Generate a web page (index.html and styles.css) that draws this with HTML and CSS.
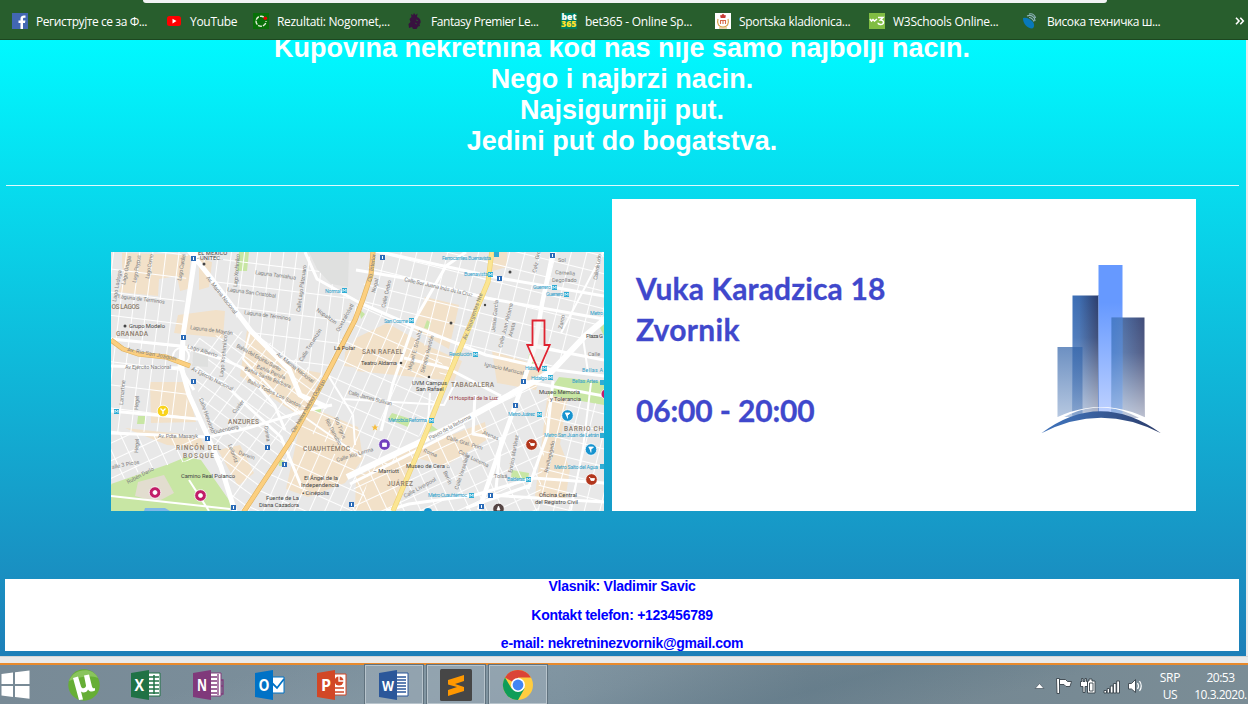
FILE: index.html
```html
<!DOCTYPE html>
<html lang="sr">
<head>
<meta charset="utf-8">
<title>Nekretnine Zvornik</title>
<link rel="stylesheet" href="styles.css">
</head>
<body>
<div class="screen">
  <header class="bookmarks">
    <div class="toolbar-edge"></div>
    <nav class="bookmark-list">
      <a class="bookmark"><svg class="fav" viewBox="0 0 16 16"><rect width="16" height="16" fill="#4267b2"/><path d="M11 16V10h2l.4-2.500H11V6c0-.9.400-1.300 1.300-1.300h1.200V2.600C11 2.200 8.500 2.600 8.500 5.600v1.900H6.500V10h2v6z" fill="#fff"/></svg><span class="b1">Региструјте се за Ф...</span></a>
      <a class="bookmark short"><svg class="fav" viewBox="0 0 16 16"><rect x="1" y="3" width="14" height="10" rx="2.500" fill="#f00"/><path d="M6.500 5.700v4.800L10.500 8z" fill="#fff"/></svg><span class="b2">YouTube</span></a>
      <a class="bookmark"><svg class="fav" viewBox="0 0 16 16"><rect width="16" height="16" fill="#087008"/><path d="M10.800 4.100A5 5 0 1 0 13 8" fill="none" stroke="#e5eedb" stroke-width="1.400" stroke-dasharray="4 1"/><circle cx="12.300" cy="5.200" r="1.800" fill="#e80000"/></svg><span class="b3">Rezultati: Nogomet,...</span></a>
      <a class="bookmark"><svg class="fav" viewBox="0 0 16 16"><path d="M4 1l2 1 1-2 1.500 2 2-1.500-.5 3.500c3 1 4 3 3.500 6l-1 1 .5 2-2 .5-1.500 2.500H6l-1-2-3 1-.5-4 2-2-1-3 2-2z" fill="#38123f"/><path d="M9 7l2 .7M8 10l2 1" stroke="#285e2d" stroke-width=".7"/></svg><span class="b4">Fantasy Premier Le...</span></a>
      <a class="bookmark"><svg class="fav" viewBox="0 0 16 16"><rect width="16" height="16" fill="#027b5b"/><text x="0.500" y="6.700" textLength="15" lengthAdjust="spacingAndGlyphs" class="bet" fill="#fff">bet</text><text x="0" y="14.300" textLength="15.500" lengthAdjust="spacingAndGlyphs" class="bet" fill="#ffe32b">365</text></svg><span class="b5">bet365 - Online Sp...</span></a>
      <a class="bookmark"><svg class="fav" viewBox="0 0 16 16"><rect width="16" height="16" fill="#fff"/><path d="M5 2l1 .5L8 .8l2 1.700 1-.5-.7 3H5.700z" fill="#c73b35"/><path d="M3 6c-1.500 5 1 8 5 8s6.500-3 5-8" fill="none" stroke="#d9a44b" stroke-width="1.200"/><path d="M5.500 11V7.500h5V11M8 7.500V11" fill="none" stroke="#d86a4a" stroke-width="1.100"/><path d="M4 15h8" stroke="#dbaa5b"/></svg><span class="b6">Sportska kladionica...</span></a>
      <a class="bookmark"><svg class="fav" viewBox="0 0 16 16"><rect width="16" height="16" fill="#80bd43"/><path d="M1 6l1.500 2L4 6.500 5.500 8 8 6M9 4.500h5L11.500 7c4-.2 4 5-.3 4.500-1.500-.2-2.200-.8-2.200-1.700" fill="none" stroke="#fff" stroke-width="1.500"/></svg><span class="b7">W3Schools Online...</span></a>
      <a class="bookmark"><svg class="fav" viewBox="0 0 16 16"><path d="M0 5c4-1 7 1 10 4 2 3 1 6-1 6.500C4 15 0 11 0 5z" fill="#0879ba"/><path d="M4 3c4-2 8 1 8 5M6 1c4-1 6 2 6.500 4M6 4.500c2 0 4 2 5 4" fill="none" stroke="#8eb4bb" stroke-width="1.200"/></svg><span class="b8">Висока техничка ш...</span></a>
    </nav>
    <svg class="more" viewBox="0 0 10 8"><path d="M1 .8L4 4 1 7.200M5.300.8l3 3.200-3 3.200" fill="none" stroke="#fff" stroke-width="1.600"/></svg>
  </header>

  <main class="page">
    <h1 class="slogan"><span>Kupovina nekretnina kod nas nije samo najbolji nacin.</span><span>Nego i najbrzi nacin.</span><span>Najsigurniji put.</span><span>Jedini put do bogatstva.</span></h1>
    <hr class="rule">
    <section class="location">
      <svg class="map" viewBox="111 252 493 259">
        <defs>
          <pattern id="ga" width="13" height="23" patternUnits="userSpaceOnUse" patternTransform="rotate(7)"><path d="M0 0H13M0 0V23" stroke="#fff" stroke-width="2"/></pattern>
          <pattern id="gb" width="15" height="12" patternUnits="userSpaceOnUse" patternTransform="rotate(36)"><path d="M0 0H15M0 0V12" stroke="#fff" stroke-width="2"/></pattern>
          <pattern id="gc" width="15" height="17" patternUnits="userSpaceOnUse" patternTransform="rotate(14)"><path d="M0 0H15M0 0V17" stroke="#fff" stroke-width="2"/></pattern>
          <pattern id="gd" width="15" height="16" patternUnits="userSpaceOnUse" patternTransform="rotate(-25)"><path d="M0 0H15M0 0V16" stroke="#fff" stroke-width="2"/></pattern>
          <pattern id="ge" width="14" height="19" patternUnits="userSpaceOnUse" patternTransform="rotate(24)"><path d="M0 0H14M0 0V19" stroke="#fff" stroke-width="2"/></pattern>
        </defs>
        <rect x="111" y="252" width="493" height="259" fill="#e8e8e8"/>
        <g fill="#f2e1c9">
          <path d="M122 253l69 2-3 34-8 2-3-15-18 3-1 17-40-4 7-13-3-13z"/>
          <path d="M199 258l13 4-3 25-10 3zM178 315l38-5 9 1-2 27-49-5z"/>
          <path d="M247 330l47 38 27 5-18 45-20-13-43-29z"/>
          <path d="M150 382h36l10 40-45 1zM125 428l75 8 5 12-38-3z"/>
          <path d="M218 450l22-5 14 28-16 13zM304 407l13 3 41 17 5 32-18 24-37 14-22-8z"/>
          <path d="M356 338l31-15 39 22 36 16-8 20-98-10zM425 297l34 8-10 44-35-20z"/>
          <path d="M356 477l60-30-21 63h-40zM420 447l65-25 3 17-43 27-28-8z"/>
          <path d="M492 351l52 16-8 23-39-7zM548 391l20 3-8 50 10 25-5 32-22 0-8-5z"/>
          <path d="M494 252h13v15l-18 5z"/>
          <path d="M345 352l13-14v30l-14-2z"/>
        </g>
        <g fill="#c8e6a4">
          <path d="M239 252h10l-2 19h-10zM111 484l58-20 17-7 15 3 30 43-1 8H111zM559 377l45 5v23l-57-10zM392 413l19 6-3 8-20-8zM427 422l11 8-12 3zM512 470l17 3-1 7-17-3zM138 416h7v8h-8zM359 309l6 5-4 5zM427 320l4 3-3 6-4-1zM529 354l6 3-2 8-5-3zM600 328l4-4v12z"/><circle cx="318" cy="410" r="3"/><path d="M278 458l6 3-1 5-4 0z"/>
        </g>
        <path d="M138 482l26-7 10 18-17 9-22-6z" fill="#e2ddcf"/><path d="M145 508l20 0 5 3h-26z" fill="#80b9e6"/>
        <path d="M111 252h77l-6 87 5 60 10 31-86 3z" fill="url(#ga)"/>
        <path d="M111 433l87 5 15 18-70 14-32 15z" fill="url(#gd)"/>
        <path d="M190 252h115l53 56-33 70-38-7-50-53z" fill="url(#ga)"/>
        <path d="M187 340l64-10 74 48-80 133h-9l-28-75z" fill="url(#gb)"/>
        <path d="M373 252h118l-2 35-44 96-30-55-57-24z" fill="url(#gc)"/>
        <path d="M490 252h114v66l-54 50-98-22z" fill="url(#gc)"/>
        <path d="M357 303l56 23 37 48-24 55-46 46-58-35-30-20 33-47z" fill="url(#ge)"/>
        <path d="M290 440l80 25-8 46H247z" fill="url(#ge)"/>
        <path d="M356 474l62-29 110-65 21 13-10 118H350z" fill="url(#gd)"/>
        <path d="M548 395l56 10v106h-68z" fill="url(#gc)"/>
        <path d="M309 252h40l-1 35-17-3-14-15zM194 346l14 3 0 18-16-1z" fill="#dfe0df"/>
        <g fill="none" stroke="#fff" stroke-linejoin="round" stroke-width="3">
          <path stroke-width="5" d="M187 248l24 30 40 53 38 38 11 26 27 12M196 250l-13 86-1 34 7 25 19 42 13 30 15 48"/>
          <path d="M111 339l70 7 44 14 18 8 32 38 10 24M181 346l-1 22 14 22M194 369l30 14 20 20 37 34 21 51M111 366l70 2M111 411l87 8M111 433l97 4 40-9 60-18 24-5"/>
          <path d="M305 252l12 27 43 24 53 23 73 29 63 14 55 7M356 270l60 10 70 18 67 12 51 9M439 265l60 13 105 18M439 265l-63-14"/>
          <path d="M111 496l119 13M189 480l20 31M250 332l-7 27 43 45 75 53M326 372l27 43 2 30M343 399l101 6 12-24" stroke-width="2"/>
          <path stroke-width="4.500" d="M553 252l-11 52-7 42-12 37-19 54-25 73"/>
          <path stroke-width="6" d="M347 477l71-34 48-24 85-47 34-36 25-21"/>
          <path d="M350 484l70-35 45-23M386 511l23-7 66-9 58-17 71 5M466 508l65-23M489 495l115 7M553 381l-6 55-19 53M523 381l81 15M537 347l67 13M404 358l43 10 54 28M466 252l-20 14-33 57M413 326l-20 57-12 48M475 395l-2 39 28 5-5 50"/>
          <path d="M393 511l35-88 2-30M591 383l-8 65-12 62M583 338l5 34M604 251l-43 82" stroke-width="2"/>
          <circle cx="181" cy="356" r="8" stroke-width="2"/>
        </g>
        <g fill="none" stroke-linejoin="round">
          <path d="M111 340l12 9 15 5 28 3 24 9M373 252l-2 23-8 24-8 21-30 58-34 62-48 73" stroke="#dfb05c" stroke-width="5"/>
          <path d="M111 340l12 9 15 5 28 3 24 9M373 252l-2 23-8 24-8 21-30 58-34 62-48 73" stroke="#fbcf80" stroke-width="3.800"/>
          <path d="M492 250l-4 32-20 48-22 52-18 46-12 29-23 54" stroke="#efd272" stroke-width="5"/><path d="M492 250l-4 32-20 48-22 52-18 46-12 29-23 54" stroke="#fbe592" stroke-width="3.800"/>
        </g>
        <g class="road-label">
          <text transform="translate(206 278) rotate(52)" textLength="46">Av. Marina Nacional</text><text transform="translate(276 355) rotate(38)" textLength="46">Av. Marina Nacional</text>
          <text transform="translate(255 274) rotate(8)" textLength="41">Laguna Tamiahua</text><text transform="translate(227 291) rotate(8)" textLength="49">Laguna San Cristóbal</text><text transform="translate(244 314) rotate(8)" textLength="47">Laguna de Términos</text><text transform="translate(118 298) rotate(7)" textLength="47">Laguna de Términos</text><text transform="translate(190 329) rotate(8)" textLength="43">Laguna de Mayrán</text>
          <text transform="translate(187 348) rotate(17)">Lago Alberto</text><text transform="translate(127 351) rotate(11)" textLength="50">Av. Río San Joaquín</text><text x="125" y="369" textLength="46">Av Ejército Nacional</text><text transform="translate(191 370) rotate(27)" textLength="46">Av Ejército Nacional</text>
          <text transform="translate(125 285) rotate(-78)">Lago Onega</text><text transform="translate(136 283) rotate(-80)" textLength="28">Lago Peypus</text><text transform="translate(149 279) rotate(-80)" textLength="25">Lago Como</text><text transform="translate(181 281) rotate(-80)" textLength="27">Lago Cardiel</text><text transform="translate(116 302) rotate(-80)">Lago Ladoga</text><text transform="translate(237 287) rotate(-85)" textLength="33">Lago Xochimilco</text><text transform="translate(223 377) rotate(-84)" textLength="42">Lago Xochimilco</text><text transform="translate(300 312) rotate(-82)" textLength="47">Calle Lago Pátzcuaro</text>
          <text transform="translate(236 347) rotate(29)" textLength="50">Bahía del Espíritu Santo</text><text transform="translate(244 370) rotate(22)">Bahía Santa Bárbara</text><text transform="translate(247 382) rotate(26)">Bahía Todos Los Santos</text><text transform="translate(256 368) rotate(22)">Bahía Perula</text>
          <text transform="translate(302 362) rotate(-58)">Calle Tonantzin</text><text transform="translate(316 311) rotate(35)">Nopaltzin</text><text transform="translate(339 332) rotate(-61)">Quetzalcóatl</text><text transform="translate(294 433) rotate(-59)" textLength="61">Cto. Interior Melchor Ocampo</text><text transform="translate(371 282) rotate(-80)" textLength="28">Cto. Interior</text>
          <text transform="translate(404 281) rotate(13)" textLength="70">Calle Sor Juana Inés de la Cruz</text><text transform="translate(466 340) rotate(-70)" textLength="49">Av. Insurgentes Nte</text><text transform="translate(375 293) rotate(-76)">Nogal</text><text transform="translate(385 308) rotate(-77)">Calle Cedro</text><text transform="translate(411 371) rotate(-75)">Miguel E. Schultz</text><text transform="translate(424 373) rotate(-75)">Serapio Rendón</text>
          <text transform="translate(495 332) rotate(-84)">Jesús García</text><text transform="translate(502 348) rotate(-76)">Calle Juan Aldama</text><text transform="translate(512 337) rotate(-76)">Arista</text><text transform="translate(484 366) rotate(13)">Ignacio Mariscal</text><text transform="translate(536 273) rotate(-78)">Calz. Gro</text><text transform="translate(597 280) rotate(-80)" textLength="26">Calle de León</text><text transform="translate(562 329) rotate(-78)">Zarco</text><text x="555" y="274" transform="rotate(4 555 274)">Camelia</text><text x="552" y="282">Degollado</text><text x="558" y="262">Sol</text>
          <text transform="translate(123 405) rotate(-85)">Lamartine</text><text transform="translate(138 410) rotate(-85)">Hegel</text><text transform="translate(138 453) rotate(-85)">Hegel</text><text x="158" y="438" textLength="40">Av. Pdte. Masaryk</text><text transform="translate(199 399) rotate(70)">Calle Herodoto</text><text transform="translate(214 434) rotate(-13)">Gutenberg</text><text transform="translate(235 414) rotate(-53)">Cuvier</text><text transform="translate(228 445) rotate(69)">Leibnitz</text><text transform="translate(238 454) rotate(20)">Darwin</text><text transform="translate(264 426) rotate(80)">Corina</text><text transform="translate(325 420) rotate(62)">Río Danubio</text><text transform="translate(334 418) rotate(68)">Río Tigris</text><text transform="translate(128 484) rotate(-28)">Rubén Darío</text><text transform="translate(112 469) rotate(-11)">alle 3 Picos</text>
          <text transform="translate(337 462) rotate(-17)">Calle Río Lerma</text><text transform="translate(348 394) rotate(15)" textLength="45">Calle James Sullivan</text><text transform="translate(430 440) rotate(-28)" textLength="47">Paseo de la Reforma</text><text transform="translate(446 439) rotate(17)">Calle Gral. Prim</text><text transform="translate(458 453) rotate(26)">Calle Lucerna</text><text transform="translate(482 434) rotate(22)">Atenas</text><text transform="translate(423 452) rotate(22)">Roma</text><text transform="translate(443 472) rotate(65)">Berlín</text><text transform="translate(458 490) rotate(-72)">Calle Versalles</text><text transform="translate(405 498) rotate(-29)">Calle Liverpool</text><text transform="translate(512 473) rotate(-80)">Enrico Martínez</text><text transform="translate(548 473) rotate(-78)">Revillagigedo</text><text x="494" y="478">Tolsá</text><text x="588" y="356">Calle</text>
        </g>
        <g class="district"><text x="111.500" y="309" textLength="28">OS LAGOS</text><text x="116" y="336" textLength="32">GRANADA</text><text x="362" y="354" textLength="41">SAN RAFAEL</text><text x="451" y="387" textLength="43">TABACALERA</text><text x="228" y="424" textLength="31">ANZURES</text><text x="176" y="450" textLength="45">RINCÓN DEL</text><text x="183" y="458" textLength="31">BOSQUE</text><text x="303" y="451" textLength="47">CUAUHTÉMOC</text><text x="387" y="486" textLength="26">JUÁREZ</text><text x="564" y="431" textLength="39">BARRIO CH</text></g>
        <g class="poi"><text x="198" y="254.500">EL MÉXICO</text><text x="197" y="260">- UNITEC..</text><circle cx="204" cy="264" r="1.500"/><circle cx="125" cy="326" r="1.500"/><text x="129" y="328" textLength="36">Grupo Modelo</text><text x="334" y="350">La Polar</text><text x="361" y="365" textLength="36">Teatro Aldama</text><circle cx="401" cy="363" r="1.300"/><circle cx="451" cy="323" r="1.500"/><circle cx="485" cy="305" r="1.200"/><circle cx="510" cy="272" r="1.500"/><circle cx="429" cy="377" r="1.300"/><text x="412" y="385" textLength="35">UVM Campus</text><text x="416" y="391">San Rafael</text><text x="449" y="400" class="hospital" textLength="49">H Hospital de la Luz</text><text x="539" y="394" textLength="41">Museo Memoria</text><text x="550" y="401">y Tolerancia</text><text x="181" y="478" textLength="54">Camino Real Polanco</text><text x="304" y="480" textLength="34">El Ángel de la</text><text x="301" y="487" textLength="38">Independencia</text><text x="302" y="495">▪ Cinépolis</text><text x="266" y="500" textLength="33">Fuente de La</text><text x="259" y="507" textLength="40">Diana Cazadora</text><text x="406" y="468" textLength="44">Museo de Cera ⌂</text><text x="373" y="473">– Marriott</text><text x="539" y="497" textLength="38">Oficina Central</text><text x="535" y="504" textLength="43">del Registro Civil</text><text x="586" y="338" textLength="17">Plaza G</text></g>
        <g class="metro"><text x="325" y="293" textLength="16">Normal</text><text x="442" y="260" textLength="49">Ferrocarriles Buenavista</text><text x="464" y="276" textLength="24">Buenavista</text><text x="533" y="289" textLength="18">Guerrero</text><text x="546" y="296" textLength="17">Guerrero</text><text x="384" y="323" textLength="24">San Cosme</text><text x="449" y="356" textLength="23">Revolución</text><text x="525" y="370" textLength="16">Hidalgo</text><text x="531" y="380" textLength="16">Hidalgo</text><text x="388" y="422" textLength="39">Metrobús Reforma</text><text x="508" y="416" textLength="27">Metro Juárez</text><text x="544" y="437" textLength="55">Metro San Juan de Letrán</text><text x="554" y="469" textLength="44">Metro Salto del Agua</text><text x="507" y="481" textLength="18">Balderas</text><text x="428" y="497" textLength="39">Metro Cuauhtémoc</text><text x="582" y="372" textLength="21">Bellas A</text><text x="572" y="383" textLength="26">Bellas Artes</text><text x="590" y="315" textLength="13">Metro</text></g>
        <g fill="#2facd4"><path d="M342 288h5v5h-5zM494 252h5v5h-5zM488 272h5v5h-5zM552 285h5v5h-5zM564 292h5v5h-5zM409 318h5v5h-5zM473 352h5v5h-5zM542 366h5v5h-5zM548 375h5v5h-5zM429 418h5v5h-5zM537 412h5v5h-5zM600 433h5v5h-5zM600 464h5v5h-5zM526 477h5v5h-5zM469 493h5v5h-5zM114 409h5v5h-5zM600 380h5v5h-5z"/></g>
        <g fill="none" stroke="#fff" stroke-width=".7"><path d="M343 292v-3l1.500 2 1.500-2v3M489 276v-3l1.500 2 1.500-2v3M553 289v-3l1.500 2 1.500-2v3M565 296v-3l1.500 2 1.500-2v3M410 322v-3l1.500 2 1.500-2v3M474 356v-3l1.500 2 1.500-2v3M543 370v-3l1.500 2 1.500-2v3M549 379v-3l1.500 2 1.500-2v3M430 422v-3l1.500 2 1.500-2v3M538 416v-3l1.500 2 1.500-2v3M527 481v-3l1.500 2 1.500-2v3M470 497v-3l1.500 2 1.500-2v3M115 413v-3l1.500 2 1.500-2v3"/></g>
        <g fill="#2a6bb8"><path d="M191 256h5v5h-5zM181 335h5v5h-5zM191 379h5v5h-5zM205 436h5v5h-5zM265 445h5v5h-5zM282 462h5v5h-5zM231 505h5v5h-5zM349 502h5v5h-5zM380 255h5v5h-5zM497 276h5v5h-5zM550 253h5v5h-5zM521 379h5v5h-5zM513 403h5v5h-5zM488 493h5v5h-5zM479 504h5v5h-5z"/></g>
        <g fill="#fff"><path d="M193 257h1v3h-1zM183 336h1v3h-1zM193 380h1v3h-1zM207 437h1v3h-1zM267 446h1v3h-1zM284 463h1v3h-1zM233 506h1v3h-1zM351 503h1v3h-1zM382 256h1v3h-1zM499 277h1v3h-1zM552 254h1v3h-1zM523 380h1v3h-1zM515 404h1v3h-1zM490 494h1v3h-1zM481 505h1v3h-1z"/></g>
        <g stroke="#fff" stroke-width=".8"><circle cx="163" cy="411" r="5.800" fill="#f9d31c"/><path d="M160.500 408.500l2.500 2.500v3m2.500-5.500l-2.500 2.500" fill="none" stroke-width="1.300"/><circle cx="155" cy="492.500" r="5.800" fill="#c11d68"/><circle cx="200.500" cy="495.500" r="5.800" fill="#c11d68"/><circle cx="155" cy="492.500" r="2" fill="#fff"/><circle cx="200.500" cy="495.500" r="2" fill="#fff"/><circle cx="384.500" cy="444.500" r="5.800" fill="#7140bd"/><path d="M382.500 443h4v3.500h-4z" fill="#fff"/><g fill="#1793cf"><circle cx="567.500" cy="415.500" r="5.800"/><circle cx="591" cy="449.500" r="5.800"/></g><path d="M565 413h5l-2.500 2.500v3M588.500 447h5l-2.500 2.500v3" fill="#fff"/><g fill="#b2361c"><circle cx="531.500" cy="444.500" r="5.800"/><circle cx="591.500" cy="479.500" r="5.800"/></g><path d="M529 442.500h1l1 3h3l.5-2h-4M589 477.500h1l1 3h3l.5-2h-4" fill="#fff"/><circle cx="498.500" cy="509" r="5.800" fill="#554544"/><path d="M497 510l1.500-4 1.500 4z" fill="#fff"/><circle cx="606" cy="394" r="5" fill="#c11d68"/></g>
        <path d="M375 424l1 2.500h2.500l-2 1.500.7 2.500-2.200-1.500-2.200 1.500.7-2.500-2-1.500h2.500z" fill="#f6bd3c"/>
        <circle cx="428" cy="512" r="4" fill="#1793cf"/>
        <path d="M532.500 320.500h12V345h5.200l-11.200 25.500-11.200-25.500h5.200z" fill="#f4f1ee" fill-opacity=".45" stroke="#df2330" stroke-width="1.800"/>
      </svg>
      <div class="card">
        <div class="address"><span class="a1">Vuka Karadzica 18</span><span class="a2">Zvornik</span><span class="a3">06:00 - 20:00</span></div>
        <svg class="logo" viewBox="1040 262 122 174">
          <defs>
            <linearGradient id="l1"><stop stop-color="#3d70b8"/><stop offset=".25" stop-color="#3d6cb0"/><stop offset="1" stop-color="#2b3b69"/></linearGradient>
            <linearGradient id="l2" x2="0" y2="1"><stop offset=".25" stop-color="#6699ff"/><stop offset="1" stop-color="#bfd2ff"/></linearGradient>
            <linearGradient id="l3" x2="0" y2="1"><stop stop-color="#fff" stop-opacity="0"/><stop offset=".35" stop-color="#fff" stop-opacity=".1"/><stop offset="1" stop-color="#fff" stop-opacity=".65"/></linearGradient>
            <linearGradient id="l4"><stop stop-color="#3c6eb8"/><stop offset=".35" stop-color="#4c75b4"/><stop offset=".36" stop-color="#4e6da2"/><stop offset="1" stop-color="#414c78"/></linearGradient>
            <linearGradient id="l5" x2="0" y2="1"><stop stop-color="#3465aa" stop-opacity=".72"/><stop offset="1" stop-color="#3465aa" stop-opacity=".36"/></linearGradient>
          </defs>
          <path d="M1072.500 295.500h26.500v120h-26.500z" fill="url(#l1)"/><path d="M1072.500 295.500h26.500v120h-26.500z" fill="url(#l3)"/>
          <path d="M1098.500 265h24v150h-24z" fill="url(#l2)"/>
          <path d="M1111.500 317.500h33v100h-33z" fill="url(#l4)"/><path d="M1111.500 317.500h33v100h-33z" fill="url(#l3)"/>
          <path d="M1111.500 317.500h11v100h-11z" fill="#5c94eb" fill-opacity=".35"/>
          <path d="M1057.500 347h25v70h-25z" fill="url(#l5)"/>
          <path d="M1098.500 295v120" stroke="#7999d7" stroke-width="1"/>
          <path d="M1041 433Q1100 382 1161 433L1161 426Q1101 388 1041 426z" fill="#fff"/>
          <path d="M1041.300 433.300Q1100 389.300 1161 433.300Q1101 402 1041.300 433.300z" fill="url(#l1)"/>
        </svg>
      </div>
    </section>
    <footer class="contact"><p>Vlasnik: Vladimir Savic</p><p>Kontakt telefon: +123456789</p><p>e-mail: nekretninezvornik@gmail.com</p></footer>
  </main>
  <div class="hscroll"></div>
  <div class="taskbar">
    <div class="apps">
      <div class="start"><svg width="30" height="30" viewBox="0 0 30 30"><path d="M1.500 4L13 2.600V14H1.500zM15 2.300L29.500.5V14H15zM1.500 16H13v11L1.500 25.500zM15 16h14.500v12.800L15 27z" fill="#fff"/></svg></div>
      <div class="app"><svg viewBox="0 0 32 32"><circle cx="16" cy="16" r="15.700" fill="#66ae35"/><path d="M1 12C5 0 24-3 30 9 22 6 10 8 1 12z" fill="#89c45d"/><path d="M5 9l5-1.500 3 10c1 3 5 2 5-1l-2-10 5-1 3 12c.6 2 2 2 3 1.500v2.500c-3 2-6 1-7-1-1 3-5 4-7 2l2 8-4 .5z" fill="#fff"/></svg></div>
      <div class="app"><svg viewBox="0 0 32 32"><path d="M18 4h12v23H18z" fill="#fff" stroke="#207245"/><path d="M19 8h10M19 12h10M19 16h10M19 20h10M19 24h10M24 6v19" stroke="#207245" stroke-width="1.500"/><path d="M1 4l18-3v30L1 28z" fill="#207245"/><text x="4.500" y="22" textLength="9.500" lengthAdjust="spacingAndGlyphs" class="office">X</text></svg></div>
      <div class="app"><svg viewBox="0 0 32 32"><path d="M17 4h12v23H17z" fill="#fff" stroke="#80397b"/><path d="M19 8h6M19 12h6M19 16h6M19 20h6M19 24h6M26 5v21M29 11h2v14h-2M29 17h2" fill="none" stroke="#80397b" stroke-width="1.300"/><path d="M1 4l18-3v30L1 28z" fill="#80397b"/><text x="5" y="22" textLength="10" lengthAdjust="spacingAndGlyphs" class="office">N</text></svg></div>
      <div class="app"><svg viewBox="0 0 32 32"><path d="M18 8h12v16H18z" fill="#fff" stroke="#0072c6"/><path d="M18 14l5 5 7-9" fill="none" stroke="#0072c6" stroke-width="1.800"/><path d="M1 4l18-3v30L1 28z" fill="#0072c6"/><text x="4.500" y="22" textLength="11" lengthAdjust="spacingAndGlyphs" class="office">O</text></svg></div>
      <div class="app"><svg viewBox="0 0 32 32"><path d="M18 5h12v21H18z" fill="#fff" stroke="#d24726"/><path d="M19 19h9M19 23h9" stroke="#d24726" stroke-width="1.500"/><circle cx="23" cy="12" r="4.500" fill="#d24726"/><path d="M23 7v5h5" fill="none" stroke="#fff" stroke-width="1.300"/><path d="M1 4l18-3v30L1 28z" fill="#d24726"/><text x="5" y="22" class="office">P</text></svg></div>
      <div class="app open"><svg viewBox="0 0 32 32"><path d="M18 4h12v23H18z" fill="#fff" stroke="#2b579a"/><path d="M19 8h9M19 11h9M19 14h9M19 17h9M19 20h9M19 23h9" stroke="#2b579a" stroke-width="1.300"/><path d="M1 4l18-3v30L1 28z" fill="#2b579a"/><text x="4" y="21.500" textLength="12" lengthAdjust="spacingAndGlyphs" class="office word">W</text></svg></div>
      <div class="app open"><svg viewBox="0 0 32 32"><rect width="32" height="32" rx="1.500" fill="#464646"/><path d="M8 11l16-5v6l-9 3 9 3v4L8 27v-6l9-3-9-2.500z" fill="#ff9800"/></svg></div>
      <div class="app open"><svg viewBox="0 0 32 32"><circle cx="16" cy="16" r="15" fill="#ffcd40"/><path d="M16 16L3 8.500A15 15 0 0 1 29 8.500H16z" fill="#db4437"/><path d="M3 8.500A15 15 0 0 0 16 31l6.500-11.500L16 16 9.500 19.500z" fill="#0f9d58"/><circle cx="16" cy="16" r="7" fill="#fff"/><circle cx="16" cy="16" r="5.400" fill="#4285f4"/></svg></div>
    </div>
    <svg class="tray" viewBox="1034 670 112 30">
      <path d="M1035 688.500l4.500-5 4.500 5z" fill="#fff" stroke="#53606a" stroke-width=".8"/>
      <g fill="#fff" stroke="#39434b" stroke-width=".9"><path d="M1056.500 678.500h3v15h-2.500zM1059.500 679.500h6l2 2h4l-1.500 5h-4l-2-2h-4.500z"/><path d="M1081.500 678.500h1.500v3h2v-3h1.500v3h1v5h-2.500v6h-2v-6h-2.500v-5h1.500zM1089 679h3v2h3v12h-7.500v-12h1.500zM1089.500 683h3.500v8h-3.500z"/><path d="M1104 690.500h2.500v2.500h-2.500zM1107.200 688.500h2.300v4.500h-2.300zM1110.300 686h2.700v7h-2.700zM1113.400 683.500h2.700v9.500h-2.700zM1116.700 681h2.800v12h-2.800z"/><path d="M1128.500 683.500h3l4-4v13l-4-3.500h-3z"/></g><path d="M1137.500 683q2 3 0 6m2-8q3.500 5 0 10" fill="none" stroke="#fff" stroke-width="1.200"/>
    </svg>
    <div class="lang"><span>SRP</span><span>US</span></div>
    <div class="clock"><span>20:53</span><span>10.3.2020.</span></div>
  </div>
</div>
</body>
</html>
```
FILE: styles.css
```css
* { box-sizing: border-box; }
body { margin: 0; overflow: hidden; font-family: "Liberation Sans", Arial, sans-serif; }
.screen { width: 1248px; height: 704px; display: flex; flex-direction: column; overflow: hidden; background: #eaeaea; }
.bookmarks { height: 40px; flex: none; background: #285e2d; border-bottom: 1px solid #1c471f; display: grid; grid-template: 3px 36px / 1fr 22px; }
.toolbar-edge { grid-column: 1 / 3; height: 3px; width: 964px; margin-left: 143px; background: #f1f3f4; border-radius: 0 0 8px 8px; }
.bookmark-list { display: flex; padding-left: 12px; }
.bookmark { width: 154px; flex: none; display: flex; align-items: center; gap: 8px; color: #fff; font: 12px "Open Sans", "Noto Sans", sans-serif; white-space: nowrap; }
.bookmark.short { width: 87px; }
.b1, .b4, .b8 { letter-spacing: -.42px; }
.b2, .b3, .b6 { letter-spacing: -.3px; }
.b5, .b7 { letter-spacing: -.25px; }
.fav { width: 16px; height: 16px; flex: none; }
.more { width: 10px; height: 8px; align-self: center; margin-left: 9px; }
.bet { font: 800 8px "Open Sans", sans-serif; }
.page { width: 1246px; height: 616px; flex: none; overflow: hidden; padding: 0 7px 0 5px; background: linear-gradient(#00f9ff, #1d7fb8); }
.slogan { margin: -7px 0 0; font-size: 27px; line-height: 31px; color: #fff; text-align: center; }
.slogan span { display: block; }
.rule { height: 1px; margin: 28px 0 13px 1px; border: 0; background: #e1f9fc; }
.location { display: flex; align-items: flex-end; gap: 8px; padding-left: 106px; }
.map { width: 493px; height: 259px; flex: none; }
.card { width: 584px; height: 312px; flex: none; background: #fff; display: flex; justify-content: space-between; padding: 63px 34px 0 24px; }
.address { display: flex; flex-direction: column; font: 700 30px/41px Lato, sans-serif; color: #3f48cc; padding-top: 6px; white-space: nowrap; -webkit-text-stroke: .3px #3f48cc; }
.a1 { letter-spacing: .15px; }
.a2 { letter-spacing: .3px; }
.a3 { margin-top: 40px; letter-spacing: -.15px; }
.logo { width: 122px; height: 174px; }
.contact { height: 72px; margin-top: 68px; background: #fff; color: #00f; text-align: center; font-size: 14px; letter-spacing: -.27px; font-weight: 700; line-height: 16px; display: flex; flex-direction: column; gap: 12.500px; }
.contact p { margin: 0; }
.contact p:first-child { margin-top: -1px; }
.hscroll { height: 7px; flex: none; background: #eaeaea; border-top: 1px solid #d5d5d5; }
.taskbar { height: 41px; flex: none; display: flex; border-top: 2px solid #e88a2c; background: linear-gradient(165deg, transparent 20%, #8fa1ac55 35%, transparent 50%, #526f8055 65%, transparent 80%), linear-gradient(90deg, #788a96, #7d929f 45%, #718591 65%, #7b8d96); }
.apps { display: flex; width: 1034px; flex: none; gap: 4px; }
.start { width: 51px; padding-top: 5px; }
.app { width: 58px; display: flex; justify-content: center; align-items: center; }
.app svg { width: 32px; height: 32px; }
.open { background: #a1b1bb88; border: 1px solid #b8c4cc; outline: 1px solid #60727e; outline-offset: 0; }
.office { font: 700 16px "Open Sans", sans-serif; fill: #fff; }
.word { font-size: 14px; }
.tray { width: 112px; height: 30px; flex: none; margin-top: 5px; }
.lang, .clock { display: flex; flex-direction: column; align-items: center; font: 12px/17px "Open Sans", sans-serif; color: #fff; padding-top: 4px; flex: none; }
.lang { width: 48px; letter-spacing: -.3px; }
.clock { width: 53px; letter-spacing: -.5px; }
.road-label { font: 5.500px Roboto, sans-serif; fill: #808080; }
.district { font: 500 6.500px Roboto, sans-serif; fill: #8d7d6c; }
.poi { font: 5.800px Roboto, sans-serif; fill: #454545; }
.hospital { fill: #9b424b; }
.metro { font: 5.300px Roboto, sans-serif; fill: #2da0cb; }
```
